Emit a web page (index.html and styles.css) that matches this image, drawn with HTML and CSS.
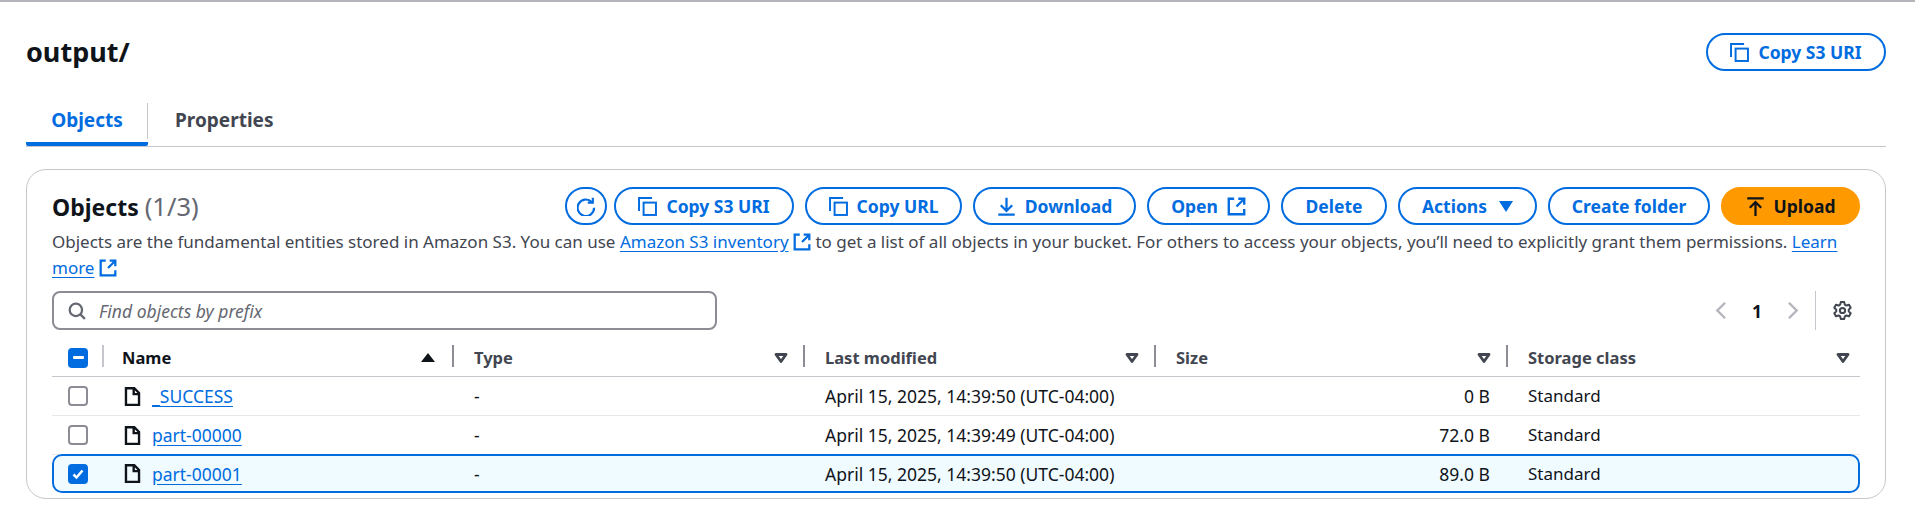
FILE: index.html
```html
<!DOCTYPE html>
<html lang="en">
<head>
    <meta charset="UTF-8">
    <meta name="viewport" content="width=device-width, initial-scale=1.0">
    <title>output/ - S3 bucket</title>
    <link rel="stylesheet" href="styles.css">
</head>
<body>
    <svg class="defs" width="0" height="0">
        <symbol id="i-copy" viewBox="0.7 0.7 14.600 14.600"><path stroke-width="1.500" d="M1.500 11.500V1.500h10"/><rect stroke-width="1.500" x="5" y="5" width="9.500" height="9.500"/></symbol>
        <symbol id="i-refresh" viewBox="1 0 15 15"><path stroke-width="1.700" d="M13.500 .5v4h-4"/><path stroke-width="1.700" d="M12.600 3.900A6.500 6.500 0 1 0 14.500 8.500"/></symbol>
        <symbol id="i-download" viewBox="0.500 0.500 15 15"><path stroke-width="1.800" d="M8 1v10M3.500 7l4.500 4.500L12.500 7M1.500 14.500h13"/></symbol>
        <symbol id="i-upload" viewBox="0.500 0.500 15 15"><path stroke-width="1.800" d="M1.500 1.500h13M8 15.500V4.500M3.500 9L8 4.500 12.500 9"/></symbol>
        <symbol id="i-external" viewBox="0 0 16 16"><path d="M9.500 1.500h5v5M14.500 1.500L8 8M6 1.500H1.500v13h13V10"/></symbol>
        <symbol id="i-search" viewBox="0 0 16 16"><circle cx="7" cy="7" r="5.500"/><path d="M11 11l4 4"/></symbol>
        <symbol id="i-file" viewBox="0 0 16 16"><path d="M2.500 1h7l4 4v10h-11zM9 1v5h4.500"/></symbol>
        <symbol id="i-left" viewBox="0 0 16 16"><path d="M11 1.500L4.500 8l6.500 6.500"/></symbol>
        <symbol id="i-right" viewBox="0 0 16 16"><path d="M5 1.500L11.500 8 5 14.500"/></symbol>
        <symbol id="i-gear" viewBox="0 0 16 16"><circle cx="8" cy="8" r="2.200"/><path d="M6.010 3.090L6.610.83h2.780l.6 2.260 1.270.73 2.250-.61 1.390 2.410-1.650 1.640v1.480l1.650 1.640-1.390 2.410-2.250-.61-1.270.73-.6 2.260H6.610l-.6-2.260-1.270-.73-2.250.61-1.390-2.410 1.650-1.640V7.260L1.100 5.620l1.390-2.410 2.250.61z"/></symbol>
        <symbol id="i-sort" viewBox="0 0 16 16"><path d="M3 4.500h10L8 11.500z"/></symbol>
    </svg>

    <header class="page-head">
        <h1>output/</h1>
        <button class="btn w-uri"><svg class="icon"><use href="#i-copy"/></svg>Copy S3 URI</button>
    </header>

    <nav class="tabs">
        <a class="tab active">Objects</a>
        <a class="tab">Properties</a>
    </nav>

    <section class="card">
        <div class="card-top">
            <h2>Objects <span class="count">(1/3)</span></h2>
            <div class="actions">
                <button class="btn btn-round"><svg class="icon"><use href="#i-refresh"/></svg></button>
                <button class="btn w-uri"><svg class="icon"><use href="#i-copy"/></svg>Copy S3 URI</button>
                <button class="btn w-url"><svg class="icon"><use href="#i-copy"/></svg>Copy URL</button>
                <button class="btn w-down"><svg class="icon"><use href="#i-download"/></svg>Download</button>
                <button class="btn w-open">Open<svg class="icon"><use href="#i-external"/></svg></button>
                <button class="btn w-del">Delete</button>
                <button class="btn w-act">Actions<span class="caret"></span></button>
                <button class="btn w-folder">Create folder</button>
                <button class="btn btn-primary w-up"><svg class="icon"><use href="#i-upload"/></svg>Upload</button>
            </div>
        </div>
        <p class="desc">Objects are the fundamental entities stored in Amazon S3. You can use <a href="#">Amazon S3 inventory</a> <svg class="icon link-icon"><use href="#i-external"/></svg> to get a list of all objects in your bucket. For others to access your objects, you’ll need to explicitly grant them permissions. <a href="#">Learn</a> <a href="#">more</a> <svg class="icon link-icon"><use href="#i-external"/></svg></p>

        <div class="filter-row">
            <div class="search">
                <svg class="icon"><use href="#i-search"/></svg>
                <span>Find objects by prefix</span>
            </div>
            <div class="pager">
                <svg class="icon"><use href="#i-left"/></svg>
                <b>1</b>
                <svg class="icon"><use href="#i-right"/></svg>
                <span class="pager-line"></span>
                <svg class="icon gear"><use href="#i-gear"/></svg>
            </div>
        </div>

        <div class="table">
            <div class="row head">
                <div class="cell"><span class="check on"><span class="dash"></span></span></div>
                <div class="cell name sorted">Name<span class="sort-up"></span></div>
                <div class="cell">Type<svg class="icon sort"><use href="#i-sort"/></svg></div>
                <div class="cell">Last modified<svg class="icon sort"><use href="#i-sort"/></svg></div>
                <div class="cell">Size<svg class="icon sort"><use href="#i-sort"/></svg></div>
                <div class="cell">Storage class<svg class="icon sort"><use href="#i-sort"/></svg></div>
            </div>
            <div class="row">
                <div class="cell"><span class="check"></span></div>
                <div class="cell name"><svg class="icon file"><use href="#i-file"/></svg><a href="#">_SUCCESS</a></div>
                <div class="cell">-</div>
                <div class="cell">April 15, 2025, 14:39:50 (UTC-04:00)</div>
                <div class="cell size">0 B</div>
                <div class="cell std">Standard</div>
            </div>
            <div class="row">
                <div class="cell"><span class="check"></span></div>
                <div class="cell name"><svg class="icon file"><use href="#i-file"/></svg><a href="#">part-00000</a></div>
                <div class="cell">-</div>
                <div class="cell">April 15, 2025, 14:39:49 (UTC-04:00)</div>
                <div class="cell size">72.0 B</div>
                <div class="cell std">Standard</div>
            </div>
            <div class="row selected">
                <div class="cell"><span class="check on"><svg viewBox="0 0 16 16"><path d="M3.500 8.500l3 3 6-7"/></svg></span></div>
                <div class="cell name"><svg class="icon file"><use href="#i-file"/></svg><a href="#">part-00001</a></div>
                <div class="cell">-</div>
                <div class="cell">April 15, 2025, 14:39:50 (UTC-04:00)</div>
                <div class="cell size">89.0 B</div>
                <div class="cell std">Standard</div>
            </div>
        </div>
    </section>
</body>
</html>
```

FILE: styles.css
```css
* {
    box-sizing: border-box;
}
body {
    margin: 0;
    height: 508px;
    overflow: hidden;
    padding: 0 29px 0 26px;
    border-top: 2px solid #b4b4bb;
    background: #fff;
    color: #0f141a;
    font-family: "Noto Sans", "Open Sans", sans-serif;
    font-size: 17.5px;
    line-height: 24px;
}
.defs {
    position: absolute;
}
.icon {
    width: 19px;
    height: 19px;
    flex: none;
    fill: none;
    stroke: currentColor;
    stroke-width: 2;
}
.page-head {
    display: flex;
    justify-content: space-between;
    align-items: center;
    height: 38px;
    margin-top: 31px;
}
h1 {
    margin: 0;
    font-size: 27px;
    font-weight: 700;
}
.btn {
    display: inline-flex;
    align-items: center;
    justify-content: center;
    gap: 9px;
    height: 38px;
    padding: 0 10px;
    border: 2px solid #006ce0;
    border-radius: 20px;
    background: #fff;
    color: #006ce0;
    font: 700 17.5px/24px "Noto Sans", sans-serif;
    white-space: nowrap;
}
.tabs {
    display: flex;
    margin-top: 26px;
    height: 50px;
    border-bottom: 1px solid #c6c6cd;
}
.tab {
    position: relative;
    display: flex;
    align-items: center;
    justify-content: center;
    height: 49px;
    font-size: 19px;
    font-weight: 700;
    color: #424650;
    border-bottom: 4px solid transparent;
}
.tab.active {
    width: 122px;
    color: #006ce0;
    border-bottom-color: #006ce0;
    border-radius: 0 0 2px 2px;
}
.tab.active::after {
    content: "";
    position: absolute;
    right: 0;
    top: 6px;
    height: 36px;
    border-right: 1px solid #c6c6cd;
}
.tab:not(.active) {
    margin-left: 27px;
}
.card {
    height: 330px;
    margin-top: 22px;
    padding: 17px 25px 0 25px;
    border: 1px solid #c6c6cd;
    border-radius: 20px;
}
.card-top {
    display: flex;
    justify-content: space-between;
    align-items: center;
    height: 38px;
}
h2 {
    margin: 0;
    font-size: 23px;
    font-weight: 700;
}
.count {
    color: #656871;
    font-size: 25.500px;
    font-weight: 400;
}
.actions {
    display: flex;
    gap: 11px;
}
.btn-round {
    width: 42px;
    padding: 0;
    margin-right: -4px;
}
.w-uri { width: 180px; }
.w-url { width: 157px; }
.w-down { width: 163px; }
.w-open { width: 123px; }
.w-del { width: 106px; }
.w-act { width: 139px; }
.w-folder { width: 162px; }
.w-up { width: 139px; }
.btn-primary {
    background: #ff9900;
    border-color: #ff9900;
    color: #0f141a;
}
.caret {
    width: 0;
    height: 0;
    margin-left: 3px;
    border-left: 7px solid transparent;
    border-right: 7px solid transparent;
    border-top: 11px solid #006ce0;
}
.desc {
    margin: 4px 0 0;
    color: #424650;
    font-size: 17px;
    line-height: 25.500px;
}
.desc a, .name a {
    color: #006ce0;
    text-decoration: underline;
    text-underline-offset: 3px;
}
.link-icon {
    width: 18px;
    height: 18px;
    color: #006ce0;
    vertical-align: -3px;
}
.filter-row {
    display: flex;
    justify-content: space-between;
    align-items: center;
    height: 39px;
    margin-top: 11px;
}
.search {
    display: flex;
    align-items: center;
    gap: 13px;
    width: 665px;
    height: 39px;
    padding: 0 14px;
    border: 2px solid #8c8c94;
    border-radius: 8px;
    color: #656871;
    font-style: italic;
}
.search .icon {
    color: #656871;
    width: 18px;
    height: 18px;
}
.pager {
    display: flex;
    align-items: center;
    height: 39px;
    color: #b4b4bb;
}
.pager b {
    color: #0f141a;
    margin: 0 21px;
}
.pager-line {
    height: 39px;
    margin: 0 17px 0 13px;
    border-left: 1px solid #c6c6cd;
}
.gear {
    color: #424650;
    margin-right: 8px;
    stroke-width: 1.700;
    stroke-linejoin: round;
}
.table {
    margin-top: 9px;
}
.row {
    display: grid;
    grid-template-columns: 52px 350px 351px 351px 352px 352px;
    height: 39px;
    border-bottom: 1px solid #e8e8ec;
}
.cell {
    display: flex;
    align-items: center;
    padding-left: 20px;
    white-space: nowrap;
}
.cell:first-child {
    padding-left: 16px;
}
.std {
    font-size: 17px;
}
.head {
    height: 38px;
    border-bottom: 1px solid #c6c6cd;
    color: #424650;
    font-size: 16.500px;
    font-weight: 700;
}
.head .cell {
    position: relative;
    justify-content: space-between;
    padding-right: 16px;
}
.head .cell:last-child {
    padding-right: 9px;
}
.head .cell:not(:last-child)::after {
    content: "";
    position: absolute;
    right: 0;
    top: 6px;
    height: 22px;
    border-right: 2px solid #8c8c94;
}
.head .cell:first-child::after {
    border-right-color: #c6c6cd;
}
.sorted {
    color: #0f141a;
}
.sort {
    width: 16px;
    height: 16px;
    stroke-width: 2.800;
    stroke-linejoin: round;
    color: #424650;
}
.sort-up {
    width: 0;
    height: 0;
    border-left: 7px solid transparent;
    border-right: 7px solid transparent;
    border-bottom: 9px solid #0f141a;
    margin-right: 3px;
}
.name {
    gap: 10px;
    padding-left: 19px;
}
.head .name {
    padding-left: 18px;
}
.file {
    width: 19px;
    height: 19px;
    color: #0f141a;
}
.size {
    justify-content: flex-end;
    padding-right: 18px;
}
.check {
    display: flex;
    align-items: center;
    justify-content: center;
    width: 20px;
    height: 20px;
    border: 2px solid #8c8c94;
    border-radius: 4px;
    background: #fff;
}
.check.on {
    background: #006ce0;
    border-color: #006ce0;
}
.check svg {
    width: 16px;
    height: 16px;
    fill: none;
    stroke: #fff;
    stroke-width: 2.500;
}
.dash {
    width: 11px;
    height: 3px;
    background: #fff;
    border-radius: 1px;
}
.selected {
    position: relative;
    background: #f0fbff;
    box-shadow: inset 0 0 0 2px #006ce0;
    border-bottom: 0;
    border-radius: 10px;
    margin-top: -1px;
}
```
